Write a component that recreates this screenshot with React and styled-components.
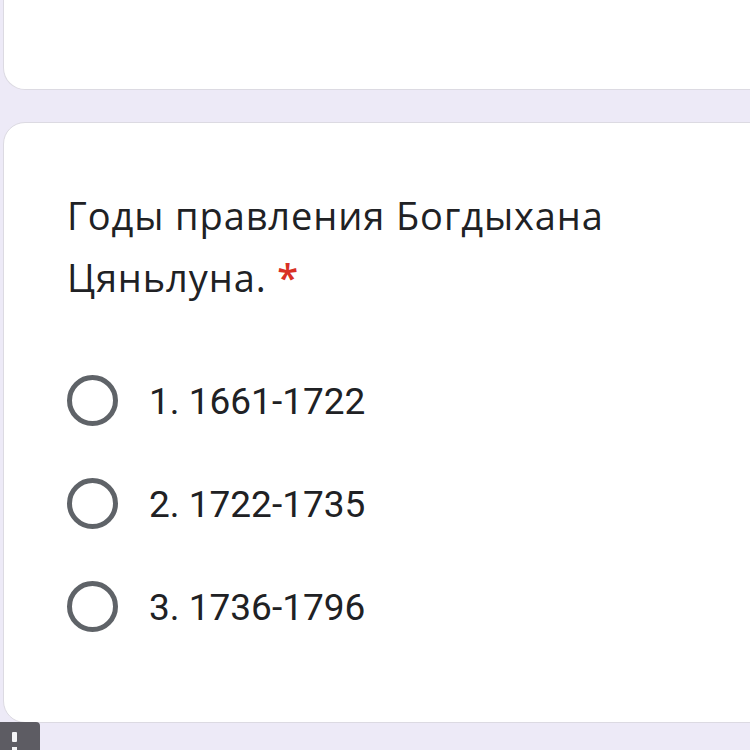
import React from "react";
import styled, { createGlobalStyle } from "styled-components";

const Global = createGlobalStyle`
  html, body { margin: 0; padding: 0; }
  body { background: #edeaf7; font-family: Roboto, "Liberation Sans", sans-serif; overflow: hidden; }
`;

const Page = styled.div`
  position: relative;
  width: 750px;
  height: 750px;
  overflow: hidden;
  background: #edeaf7;
  padding-left: 3px;
  box-sizing: border-box;
  display: flex;
  flex-direction: column;
  gap: 32px;
`;

const Card = styled.div`
  background: #ffffff;
  border: 1.5px solid #dcdae2;
  width: 820px;
  box-sizing: border-box;
  flex: none;
  ${(p) =>
    p.$top
      ? `height: 90px; border-top: none; border-radius: 0 0 22px 22px;`
      : `height: 601px; border-radius: 22px; padding: 61px 0 0 63px;`}
`;

const Title = styled.div`
  font-family: "Open Sans", Roboto, sans-serif;
  font-size: 38px;
  line-height: 62px;
  color: #202124;
  width: 580px;
  letter-spacing: 0.9px;
`;

const Required = styled.span`
  color: #d93025;
  font-weight: 600;
`;

const Options = styled.div`
  display: flex;
  flex-direction: column;
  margin-top: 41px;
`;

const Row = styled.label`
  display: flex;
  align-items: center;
  height: 103px;
  gap: 31px;
`;

const Radio = styled.span`
  width: 51px;
  height: 51px;
  box-sizing: border-box;
  border: 5px solid #5f6368;
  border-radius: 50%;
  flex: none;
`;

const OptionText = styled.span`
  font-family: Roboto, sans-serif;
  font-size: 37px;
  color: #202124;
  margin-top: 1px;
`;

const Badge = styled.div`
  position: absolute;
  left: 0;
  top: 722px;
  width: 40px;
  height: 28px;
  background: #5d5c63;
  border-top-right-radius: 4px;
`;

const Bar = styled.span`
  position: absolute;
  left: 12px;
  top: 10px;
  width: 5px;
  height: 10px;
  background: #f4f4f6;
  border-radius: 1px;
`;

const Dot = styled.span`
  position: absolute;
  left: 12px;
  top: 25px;
  width: 5px;
  height: 5px;
  background: #f4f4f6;
`;

const options = ["1. 1661-1722", "2. 1722-1735", "3. 1736-1796"];

export default function App() {
  return (
    <>
      <Global />
      <Page>
        <Card $top />
        <Card>
          <Title>
            Годы правления Богдыхана Цяньлуна. <Required>*</Required>
          </Title>
          <Options>
            {options.map((o) => (
              <Row key={o}>
                <Radio />
                <OptionText>{o}</OptionText>
              </Row>
            ))}
          </Options>
        </Card>
        <Badge>
          <Bar />
          <Dot />
        </Badge>
      </Page>
    </>
  );
}
